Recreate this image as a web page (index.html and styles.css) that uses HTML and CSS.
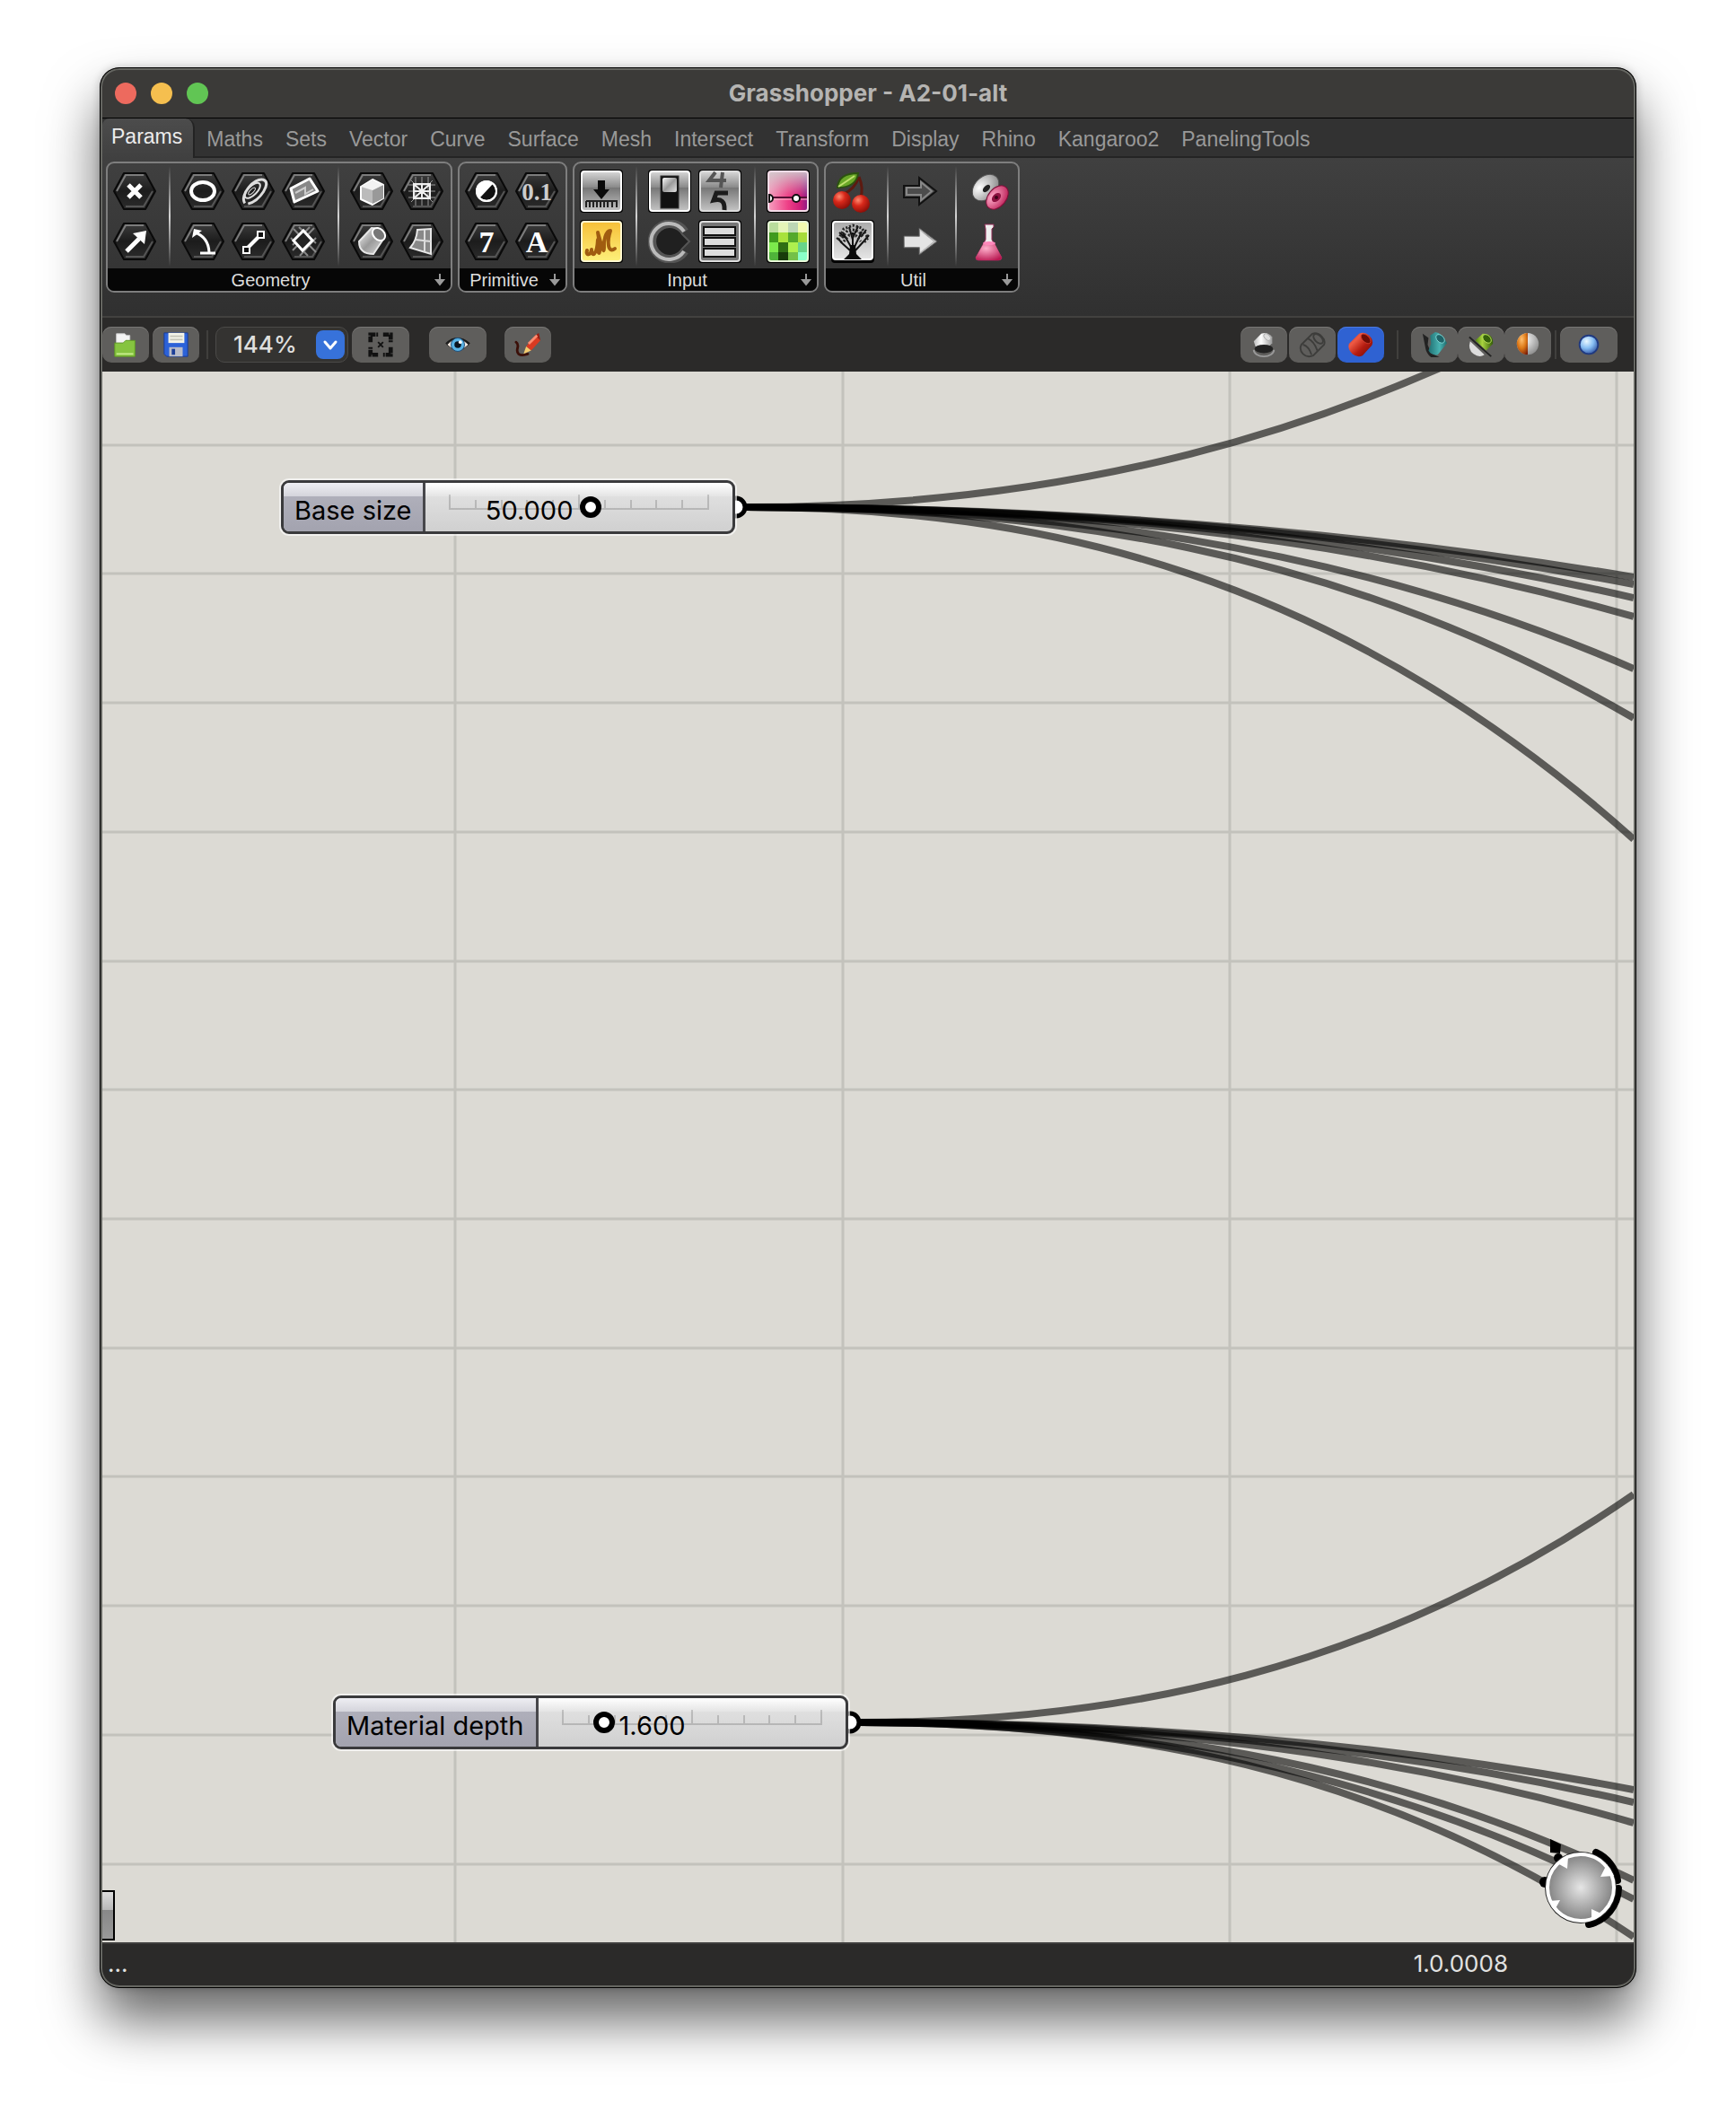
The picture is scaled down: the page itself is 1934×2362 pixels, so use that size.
FILE: index.html
```html
<!DOCTYPE html>
<html lang="en">
<head>
<meta charset="utf-8">
<title>Grasshopper - A2-01-alt</title>
<link rel="stylesheet" href="styles.css">
</head>
<body>
<svg class="defs" aria-hidden="true">
  <defs>
    <linearGradient id="hexFill" x1="0" y1="0" x2="0" y2="1"><stop offset="0" stop-color="#3c3c3c"/><stop offset=".5" stop-color="#1c1c1c"/><stop offset="1" stop-color="#2c2c2c"/></linearGradient>
    <linearGradient id="silver" x1="0" y1="0" x2="0" y2="1"><stop offset="0" stop-color="#d8d8d8"/><stop offset=".4" stop-color="#8a8a8a"/><stop offset=".42" stop-color="#777"/><stop offset="1" stop-color="#c4c4c4"/></linearGradient>
    <linearGradient id="lightSilver" x1="0" y1="0" x2="0" y2="1"><stop offset="0" stop-color="#aaa"/><stop offset="1" stop-color="#e6e6e6"/></linearGradient>
    <linearGradient id="plate" x1="0" y1="0" x2="1" y2="1"><stop offset="0" stop-color="#fafafa"/><stop offset=".5" stop-color="#9a9a9a"/><stop offset="1" stop-color="#e0e0e0"/></linearGradient>
    <linearGradient id="gold" x1="0" y1="0" x2="0" y2="1"><stop offset="0" stop-color="#f6bf38"/><stop offset="1" stop-color="#fdf07a"/></linearGradient>
    <linearGradient id="pinkSpan" x1="0" y1="0" x2="1" y2="0"><stop offset="0" stop-color="#f7a0c0"/><stop offset=".5" stop-color="#ee3f86"/><stop offset=".8" stop-color="#cf1f7a"/><stop offset="1" stop-color="#8a1c86"/></linearGradient>
    <linearGradient id="fadeDown" x1="0" y1="0" x2="0" y2="1"><stop offset="0" stop-color="#cfcfcf" stop-opacity=".85"/><stop offset="1" stop-color="#cfcfcf" stop-opacity="0"/></linearGradient>
    <radialGradient id="cherry" cx=".35" cy=".3" r=".8"><stop offset="0" stop-color="#ff8a70"/><stop offset=".4" stop-color="#d8281a"/><stop offset="1" stop-color="#7d0a05"/></radialGradient>
    <radialGradient id="pinkBall" cx=".4" cy=".3" r=".8"><stop offset="0" stop-color="#ffb0cc"/><stop offset="1" stop-color="#b8154f"/></radialGradient>
    <radialGradient id="whiteBall" cx=".35" cy=".3" r=".9"><stop offset="0" stop-color="#fff"/><stop offset="1" stop-color="#777"/></radialGradient>
    <radialGradient id="blueBall" cx=".38" cy=".32" r=".75"><stop offset="0" stop-color="#eaf8ff"/><stop offset=".5" stop-color="#86bdf3"/><stop offset="1" stop-color="#2d4f9e"/></radialGradient>
    <radialGradient id="orangeBall" cx=".45" cy=".3" r=".8"><stop offset="0" stop-color="#ffc070"/><stop offset=".5" stop-color="#dd7a18"/><stop offset="1" stop-color="#7a1d08"/></radialGradient>
    <linearGradient id="redCan" x1="0" y1="0" x2="1" y2="1"><stop offset="0" stop-color="#c8281a"/><stop offset=".3" stop-color="#ee5a44"/><stop offset=".6" stop-color="#b41c10"/><stop offset="1" stop-color="#6a0905"/></linearGradient>
    <linearGradient id="tealCan" x1="0" y1="0" x2="1" y2="0"><stop offset="0" stop-color="#1f6f72"/><stop offset=".6" stop-color="#49b4b2"/><stop offset="1" stop-color="#1d6a6c"/></linearGradient>
    <linearGradient id="greenCan" x1="0" y1="0" x2="1" y2="0"><stop offset="0" stop-color="#4d7d0c"/><stop offset=".4" stop-color="#a9d440"/><stop offset="1" stop-color="#325c05"/></linearGradient>
    <linearGradient id="whiteCan" x1="0" y1="0" x2="1" y2="0"><stop offset="0" stop-color="#bbb"/><stop offset=".4" stop-color="#fff"/><stop offset="1" stop-color="#9a9a9a"/></linearGradient>
    <radialGradient id="dial"><stop offset="0" stop-color="#e6e6e6"/><stop offset="1" stop-color="#828282"/></radialGradient>
    <symbol id="hex" viewBox="0 0 48 48">
      <path d="M1 24 12 4H36L47 24 36 44H12Z" fill="url(#hexFill)" stroke="#090909" stroke-width="2" stroke-linejoin="round"/>
      <path d="M4 24 14 6H34" fill="none" stroke="#7c7c7c" stroke-width="2"/>
      <path d="M44 24 34 41H14" fill="none" stroke="#555" stroke-width="2"/>
    </symbol>
    <symbol id="tile" viewBox="0 0 48 48"><rect x="0" y="0" width="48" height="48" rx="4" fill="#000"/></symbol>
    <symbol id="more" viewBox="0 0 14 14"><path d="M7 0V9M3 7l4 5 4-5Z" fill="#999" stroke="#999" stroke-width="2"/></symbol>
  </defs>
</svg>

<main class="window">
  <header class="titlebar">
    <div class="lights">
      <button class="light red" aria-label="Close"></button>
      <button class="light amber" aria-label="Minimize"></button>
      <button class="light green" aria-label="Zoom"></button>
    </div>
    <h1 class="title">Grasshopper - A2-01-alt</h1>
  </header>

  <nav class="tabs" aria-label="Component tabs">
    <button class="tab active">Params</button>
    <button class="tab">Maths</button>
    <button class="tab">Sets</button>
    <button class="tab">Vector</button>
    <button class="tab">Curve</button>
    <button class="tab">Surface</button>
    <button class="tab">Mesh</button>
    <button class="tab">Intersect</button>
    <button class="tab">Transform</button>
    <button class="tab">Display</button>
    <button class="tab">Rhino</button>
    <button class="tab">Kangaroo2</button>
    <button class="tab">PanelingTools</button>
  </nav>

  <div class="ribbon">
    <section class="group">
      <div class="group-body">
        <div class="cols">
          <button class="tool" aria-label="Point"><svg viewBox="0 0 48 48"><use href="#hex"/><path d="M17 17 31 31M31 17 17 31" stroke="#fff" stroke-width="5"/></svg></button>
          <button class="tool" aria-label="Vector"><svg viewBox="0 0 48 48"><use href="#hex"/><path d="M15 35 29 21" stroke="#fff" stroke-width="5"/><path d="M37 12 35 27 22 15Z" fill="#fff"/></svg></button>
        </div>
        <span class="rule"></span>
        <div class="cols">
          <button class="tool" aria-label="Circle"><svg viewBox="0 0 48 48"><use href="#hex"/><ellipse cx="24" cy="24" rx="13" ry="10" fill="none" stroke="#fff" stroke-width="4"/></svg></button>
          <button class="tool" aria-label="Circular Arc"><svg viewBox="0 0 48 48"><use href="#hex"/><path d="M15 14Q30 19 31 36M21 37H38" fill="none" stroke="#fff" stroke-width="3"/><path d="M12 20 14 10 23 12Z" fill="#fff"/></svg></button>
          <button class="tool" aria-label="Curve"><svg viewBox="0 0 48 48"><use href="#hex"/><g fill="none" stroke="#ddd" transform="rotate(-45 24 24)"><path d="M8 27C10 16 36 14 41 23S22 37 10 30" stroke-width="3"/><ellipse cx="24" cy="23" rx="11" ry="5" stroke-width="2"/><ellipse cx="23" cy="23" rx="5" ry="2"/></g></svg></button>
          <button class="tool" aria-label="Line"><svg viewBox="0 0 48 48"><use href="#hex"/><path d="M16 33 32 17" stroke="#fff" stroke-width="4"/><path d="M13 30h7v7h-7zM29 13h7v7h-7z" fill="#111" stroke="#fff" stroke-width="2"/></svg></button>
          <button class="tool" aria-label="Surface"><svg viewBox="0 0 48 48"><use href="#hex"/><path d="M10 21 31 10 40 24 14 36Z" fill="#888" stroke="#fff" stroke-width="3" stroke-linejoin="round"/><path d="M15 26 26 20V27L35 22" fill="none" stroke="#ccc" stroke-width="2"/></svg></button>
          <button class="tool" aria-label="Rectangle"><svg viewBox="0 0 48 48"><use href="#hex"/><path d="M13 10 38 36M36 9 12 34M38 20 20 40M10 20 29 40M19 8 38 26M12 28 31 8" stroke="#888" stroke-width="2"/><path d="M13 23 24 12 34 23 23 34Z" fill="#222" stroke="#fff" stroke-width="3"/></svg></button>
        </div>
        <span class="rule"></span>
        <div class="cols">
          <button class="tool" aria-label="Box"><svg viewBox="0 0 48 48"><use href="#hex"/><path d="M12 19 25 11 37 17V32L25 39 12 33Z" fill="#bbb" stroke="#fff" stroke-width="2" stroke-linejoin="round"/><path d="M25 23V38L37 32V17Z" fill="#999"/><path d="M12 19 25 23 37 17 25 12Z" fill="#f2f2f2"/></svg></button>
          <button class="tool" aria-label="Brep"><svg viewBox="0 0 48 48"><use href="#hex"/><path d="M10 24 24 9Q38 9 38 20L26 38Q10 38 10 24Z" fill="url(#plate)" stroke="#e6e6e6" stroke-width="2"/><ellipse cx="32" cy="16" rx="8" ry="6" transform="rotate(45 32 16)" fill="#777" stroke="#fff" stroke-width="2"/></svg></button>
          <button class="tool" aria-label="Mesh"><svg viewBox="0 0 48 48"><use href="#hex"/><path d="M9 17H39M9 24H39M9 31H39M17 8V40M24 8V40M31 8V40M12 12 36 36M36 12 12 36" stroke="#999"/><path d="M15 16h18v16H15zM24 16V32M15 24H33M15 16 33 32M33 16 15 32" fill="none" stroke="#eee" stroke-width="2"/></svg></button>
          <button class="tool" aria-label="Twisted Box"><svg viewBox="0 0 48 48"><use href="#hex"/><path d="M19 11 34 10V38L11 31Q18 23 19 11Z" fill="#888" stroke="#e8e8e8" stroke-width="2"/><path d="M27 11V36M17 22 34 24" stroke="#ddd" stroke-width="2"/></svg></button>
        </div>
      </div>
      <footer class="group-label"><span>Geometry</span><svg class="more" viewBox="0 0 14 14"><use href="#more"/></svg></footer>
    </section>

    <section class="group">
      <div class="group-body">
        <div class="cols">
          <button class="tool" aria-label="Boolean"><svg viewBox="0 0 48 48"><use href="#hex"/><circle cx="24" cy="24" r="12" fill="#fff"/><path d="M31 16A10 10 0 0 1 17 31Z" fill="#111"/><circle cx="24" cy="24" r="11" fill="none" stroke="#fff" stroke-width="2"/></svg></button>
          <button class="tool" aria-label="Integer"><svg viewBox="0 0 48 48"><use href="#hex"/><text class="glyph" x="24" y="36" text-anchor="middle">7</text></svg></button>
          <button class="tool" aria-label="Number"><svg viewBox="0 0 48 48"><use href="#hex"/><text class="glyph decimal" x="24" y="34" text-anchor="middle">0.1</text></svg></button>
          <button class="tool" aria-label="Text"><svg viewBox="0 0 48 48"><use href="#hex"/><text class="glyph" x="24" y="36" text-anchor="middle">A</text></svg></button>
        </div>
      </div>
      <footer class="group-label"><span>Primitive</span><svg class="more" viewBox="0 0 14 14"><use href="#more"/></svg></footer>
    </section>

    <section class="group">
      <div class="group-body">
        <div class="cols">
          <button class="tool" aria-label="Number Slider"><svg viewBox="0 0 48 48"><use href="#tile"/><rect x="2" y="2" width="44" height="44" rx="3" fill="url(#silver)" stroke="#fff" stroke-width="2"/><path d="M20 12h8v10h5l-9 11-9-11h5Z" fill="#0a0a0a"/><path d="M7 35H41V42M7 42V35M11 35v7M15 35v7M19 35v7M23 35v7M27 35v7M31 35v7M36 35v7" fill="none" stroke="#222" stroke-width="2"/></svg></button>
          <button class="tool" aria-label="Panel"><svg viewBox="0 0 48 48"><use href="#tile"/><rect x="2" y="2" width="44" height="44" rx="3" fill="url(#gold)" stroke="#fff8d0" stroke-width="2"/><path d="M8 34C6 40 12 40 13 33C13 42 19 40 20 22C19 42 25 44 20 14C24 28 27 40 27 31C26 24 29 12 34 12C30 24 31 38 39 32" fill="none" stroke="#a05c10" stroke-width="4" stroke-linecap="round" stroke-linejoin="round"/></svg></button>
        </div>
        <span class="rule"></span>
        <div class="cols">
          <button class="tool" aria-label="Boolean Toggle"><svg viewBox="0 0 48 48"><use href="#tile"/><rect x="2" y="2" width="44" height="44" rx="3" fill="url(#silver)" stroke="#fff" stroke-width="2"/><rect x="14" y="7" width="20" height="36" fill="#111" stroke="#333"/><rect x="16" y="9" width="16" height="16" rx="2" fill="url(#plate)"/></svg></button>
          <button class="tool" aria-label="Control Knob"><svg viewBox="0 0 48 48"><path d="M41 13A20 20 0 1 0 41 35" fill="none" stroke="#555" stroke-width="9"/><path d="M40 13A20 20 0 1 0 40 35" fill="none" stroke="#bbb" stroke-width="4"/><path d="M38 16 46 24 38 32A16 16 0 1 1 38 16Z" fill="#202020" stroke="#555" stroke-width="2"/></svg></button>
          <button class="tool" aria-label="Digit Scroller"><svg viewBox="0 0 48 48"><use href="#tile"/><rect x="2" y="2" width="44" height="44" rx="3" fill="url(#silver)" stroke="#ddd" stroke-width="2"/><path d="M19 3 12 12H31M27 3 25 20" fill="none" stroke="#555" stroke-width="4"/><path d="M33 26H20L17 34Q30 31 29 45" fill="none" stroke="#1c1c1c" stroke-width="5"/></svg></button>
          <button class="tool" aria-label="Value List"><svg viewBox="0 0 48 48"><use href="#tile"/><rect x="2" y="2" width="44" height="44" rx="3" fill="#777" stroke="#ddd" stroke-width="2"/><path d="M6 8H41V17H6ZM6 20H41V29H6ZM6 32H41V41H6Z" fill="#ddd" stroke="#111" stroke-width="2"/></svg></button>
        </div>
        <span class="rule"></span>
        <div class="cols">
          <button class="tool" aria-label="Gradient"><svg viewBox="0 0 48 48"><use href="#tile"/><rect x="2" y="2" width="44" height="44" rx="3" fill="url(#pinkSpan)"/><rect x="3" y="3" width="42" height="27" fill="url(#fadeDown)"/><rect x="2" y="2" width="44" height="44" rx="3" fill="none" stroke="#f4dce8" stroke-width="2"/><path d="M3 31H45" stroke="#5a1035" stroke-width="2"/><path d="M3 33H45" stroke="#fbc" stroke-width="1"/><circle cx="33" cy="32" r="4" fill="#fff" stroke="#111" stroke-width="2"/><path d="M3 28A4 4 0 0 1 3 36Z" fill="#fff" stroke="#111" stroke-width="2"/></svg></button>
          <button class="tool" aria-label="Image Sampler"><svg viewBox="0 0 48 48"><use href="#tile"/><path d="M2 2H13V14H2Z" fill="#b9dd9c"/><path d="M13 2H24V14H13Z" fill="#e4f5b8"/><path d="M24 2H35V14H24Z" fill="#bcd7b4"/><path d="M35 2H46V14H35Z" fill="#f2fbb0"/><path d="M2 14H13V25H2Z" fill="#3f9a1e"/><path d="M13 14H24V25H13Z" fill="#a8e23c"/><path d="M24 14H35V25H24Z" fill="#54a82c"/><path d="M35 14H46V25H35Z" fill="#a6dc3a"/><path d="M2 25H13V36H2Z" fill="#7cea4c"/><path d="M13 25H24V36H13Z" fill="#2f6e14"/><path d="M24 25H35V36H24Z" fill="#aef04e"/><path d="M35 25H46V36H35Z" fill="#68d48a"/><path d="M2 36H13V46H2Z" fill="#4fb43a"/><path d="M13 36H24V46H13Z" fill="#183c0a"/><path d="M24 36H35V46H24Z" fill="#74c048"/><path d="M35 36H46V46H35Z" fill="#8affc8"/><rect x="2" y="2" width="44" height="44" rx="3" fill="none" stroke="#e8f8d8" stroke-width="2"/></svg></button>
        </div>
      </div>
      <footer class="group-label"><span>Input</span><svg class="more" viewBox="0 0 14 14"><use href="#more"/></svg></footer>
    </section>

    <section class="group">
      <div class="group-body">
        <div class="cols">
          <button class="tool" aria-label="Cherry Picker"><svg viewBox="0 0 48 48"><path d="M31 8Q26 22 14 27M31 8Q36 20 33 31" fill="none" stroke="#5d1a10" stroke-width="3"/><path d="M7 20Q8 4 30 4Q28 20 7 20Z" fill="#6aa828" stroke="#2c5210" stroke-width="2"/><path d="M8 19 26 7" stroke="#c0e070" stroke-width="2"/><circle cx="12" cy="34" r="10" fill="url(#cherry)"/><circle cx="33" cy="38" r="10" fill="url(#cherry)"/></svg></button>
          <button class="tool" aria-label="Galapagos"><svg viewBox="0 0 48 48"><use href="#tile"/><rect x="2" y="2" width="44" height="42" rx="3" fill="url(#lightSilver)" stroke="#fff" stroke-width="2"/><path d="M21 34 10 24M27 34 38 22M24 32V14M22 30 13 14M26 30 34 13M24 22 20 8M24 20 30 7M12 25 6 20M37 23 42 17M16 20 9 14M33 19 39 11" stroke="#111" stroke-width="2" fill="none"/><path d="M21 28H27L28 38 34 44H14L20 38Z" fill="#0a0a0a"/><g fill="none" stroke="#222" stroke-width="3" stroke-dasharray="2 2"><path d="M8 22 14 10 24 6 34 9 41 20 36 26"/><path d="M12 20 18 12 24 11 31 13 36 20"/><path d="M14 24 20 17 28 18 33 24"/></g></svg></button>
        </div>
        <span class="rule"></span>
        <div class="cols">
          <button class="tool" aria-label="Data Input"><svg viewBox="0 0 48 48"><path d="M5 18H22V9L41 24 22 39V31H5Z" fill="#4c4c4c" stroke="#111" stroke-width="2"/><path d="M8 20H24V14L36 24 24 34V28H8Z" fill="none" stroke="#888" stroke-width="2"/></svg></button>
          <button class="tool" aria-label="Data Output"><svg viewBox="0 0 48 48"><path d="M5 18H22V9L42 24 22 39V31H5Z" fill="url(#plate)" stroke="#555"/><path d="M6 19H23V12L38 24 23 36V30H6Z" fill="#e4e4e4"/></svg></button>
        </div>
        <span class="rule"></span>
        <div class="cols">
          <button class="tool" aria-label="Relay"><svg viewBox="0 0 48 48"><ellipse cx="20" cy="20" rx="17" ry="12" transform="rotate(-45 20 20)" fill="url(#whiteBall)" stroke="#555"/><ellipse cx="21" cy="21" rx="5" ry="3" transform="rotate(-45 21 21)" fill="#222"/><ellipse cx="33" cy="31" rx="15" ry="10" transform="rotate(-50 33 31)" fill="url(#pinkBall)" stroke="#7d0f38"/><ellipse cx="32" cy="31" rx="6" ry="4" transform="rotate(-45 32 31)" fill="#8d1240"/><circle cx="32" cy="31" r="2" fill="#3c0418"/></svg></button>
          <button class="tool" aria-label="Fitness Landscape"><svg viewBox="0 0 48 48"><path d="M19 5H29V8L27 10V22L38 42Q38 45 34 45H12Q9 45 9 42L20 22V10Z" fill="#eee" stroke="#8e2a55"/><path d="M18 26H30L38 42Q38 45 34 45H12Q9 45 9 42Z" fill="url(#pinkBall)"/><ellipse cx="24" cy="26" rx="7" ry="2" fill="#f8b"/></svg></button>
        </div>
      </div>
      <footer class="group-label"><span>Util</span><svg class="more" viewBox="0 0 14 14"><use href="#more"/></svg></footer>
    </section>
  </div>

  <div class="toolbar">
    <div class="cluster files">
      <button class="btn" aria-label="Open"><svg viewBox="0 0 32 32"><path d="M5 14V3H15L17 5H21V14Z" fill="#f4f4f4" stroke="#ccc"/><path d="M3 14H13L16 11H27V30H3Z" fill="#86c440" stroke="#5f9a24"/><path d="M5 27H25" stroke="#c6ec8c" stroke-width="2"/></svg></button>
      <button class="btn" aria-label="Save"><svg viewBox="0 0 32 32"><path d="M2 2H30V30H5L2 27Z" fill="#2c62d8" stroke="#173a94" stroke-width="1"/><rect x="7" y="2" width="19" height="12" fill="#f3f3e8"/><path d="M9 6H24M9 10H24" stroke="#c4c4b8" stroke-width="2"/><rect x="8" y="19" width="16" height="11" fill="#b9bcc8"/><rect x="11" y="21" width="4" height="7" fill="#1d3f98"/></svg></button>
    </div>
    <span class="divider"></span>
    <label class="combo"><select aria-label="Zoom level"><option>144%</option><option>100%</option></select><span class="chevron"><svg viewBox="0 0 32 32"><path d="M10 13 16 20 22 13" fill="none" stroke="#fff" stroke-width="3" stroke-linecap="round" stroke-linejoin="round"/></svg></span></label>
    <button class="btn wide" aria-label="Zoom extents"><svg viewBox="0 0 32 32"><path d="M4 13V4H13M19 4H28V13M28 19V28H19M13 28H4V19" fill="none" stroke="#111" stroke-width="5" stroke-dasharray="7 1"/><path d="M13 13 19 19M19 13 13 19" stroke="#111" stroke-width="2"/></svg></button>
    <button class="btn wide eye" aria-label="Named views"><svg viewBox="0 0 32 32"><path d="M3 16Q16 1 29 16Q16 30 3 16Z" fill="#efe6de" stroke="#222"/><path d="M2 15Q15 2 30 15" fill="none" stroke="#1a1a1a" stroke-width="2"/><circle cx="16" cy="16" r="8" fill="#58b2e4" stroke="#1d4c78"/><circle cx="16" cy="16" r="4" fill="#0a1420"/><circle cx="19" cy="13" r="2" fill="#fff"/></svg></button>
    <button class="btn pen" aria-label="Sketch"><svg viewBox="0 0 32 32"><path d="M2 13C8 17 0 22 5 27C9 30 12 28 16 27" fill="none" stroke="#3b0f08" stroke-width="3" stroke-linecap="round"/><path d="M14 18 25 5 31 11 20 23Z" fill="#d93a22"/><path d="M25 5 29 2 31 11Z" fill="#991c10"/><path d="M17 15 27 5" stroke="#ff8c70" stroke-width="3"/><path d="M14 18 20 23 11 27Z" fill="#f4cc70"/></svg></button>

    <div class="cluster preview">
      <button class="btn" aria-label="No preview"><svg viewBox="0 0 32 32"><path d="M4 12 13 3Q20 0 26 7V14L22 18H6Z" fill="url(#whiteCan)"/><ellipse cx="20" cy="7" rx="5" ry="3" transform="rotate(45 20 7)" fill="#ddd" stroke="#aaa"/><path d="M4 22A12 8 0 0 0 28 22" fill="none" stroke="#999" stroke-width="2"/><ellipse cx="16" cy="21" rx="11" ry="5" fill="#222"/></svg></button>
      <button class="btn" aria-label="Wireframe preview"><svg viewBox="0 0 32 32"><g fill="none" stroke="#3d3d3b" stroke-width="2"><path d="M3 16 16 3Q22 1 27 6T30 16L17 29Q10 32 5 27T3 16Z"/><ellipse cx="23" cy="9" rx="7" ry="4" transform="rotate(45 23 9)"/><path d="M11 9Q18 12 22 23M5 16Q12 18 15 28"/></g></svg></button>
      <button class="btn selected" aria-label="Shaded preview"><svg viewBox="0 0 32 32"><path d="M2 15 14 3Q20 0 26 5Q32 11 29 17L18 29Q12 32 6 27Q0 21 2 15Z" fill="url(#redCan)"/><ellipse cx="22" cy="9" rx="7" ry="4" transform="rotate(45 22 9)" fill="#6d0c06" stroke="#c83828"/></svg></button>
    </div>
    <span class="divider"></span>
    <div class="cluster modes">
      <button class="btn" aria-label="Document preview"><svg viewBox="0 0 32 32"><path d="M2 3 9 8 8 16 12 26 22 31H12Q6 26 5 18Z" fill="#222"/><path d="M11 5 17 1Q25 2 31 14L20 28Q12 29 9 23L12 15Z" fill="url(#tealCan)"/><ellipse cx="23" cy="9" rx="6" ry="4" transform="rotate(45 23 9)" fill="#1e6468" stroke="#7fd4d2"/></svg></button>
      <button class="btn" aria-label="Selected preview"><svg viewBox="0 0 32 32"><path d="M3 12 20 28Q14 32 7 27T3 12Z" fill="#ddd"/><path d="M2 7 28 30" stroke="#222" stroke-width="2"/><path d="M9 11 18 3Q31 3 30 15L22 23Z" fill="url(#greenCan)"/><ellipse cx="23" cy="9" rx="6" ry="4" transform="rotate(45 23 9)" fill="#35600a" stroke="#b8e05c"/></svg></button>
      <button class="btn" aria-label="Preview quality"><svg viewBox="0 0 32 32"><circle cx="16" cy="15" r="13" fill="url(#whiteBall)"/><path d="M16 2A13 13 0 0 0 16 28Z" fill="url(#orangeBall)"/></svg></button>
    </div>
    <span class="divider tight"></span>
    <button class="btn wide" aria-label="Mesh settings"><svg viewBox="0 0 32 32"><circle cx="16" cy="16" r="11" fill="url(#blueBall)" stroke="#203a80" stroke-width="2"/></svg></button>
  </div>

  <div class="canvas">
    <svg class="sheet" width="1706" height="1750" viewBox="0 0 1706 1750" aria-hidden="true">
      <path class="grid" d="M0 82H1706M0 225H1706M0 369H1706M0 513H1706M0 657H1706M0 800H1706M0 944H1706M0 1088H1706M0 1231H1706M0 1375H1706M0 1519H1706M0 1663H1706M393 0V1750M825 0V1750M1256 0V1750M1687 0V1750"/>
      <g class="port"><circle cx="706" cy="151" r="10"/><circle cx="833" cy="1505" r="10"/></g>
      <g class="wires">
        <path d="M716 151C1046 151 1376 83 1706 -116"/>
        <path d="M716 151C1046 151 1376 174 1706 229"/>
        <path d="M716 151C1046 151 1376 174 1706 237"/>
        <path d="M716 151C1046 151 1376 176 1706 252"/>
        <path d="M716 151C1046 151 1376 178 1706 273"/>
        <path d="M716 151C1046 151 1376 188 1706 331"/>
        <path d="M716 151C1046 151 1376 194 1706 386"/>
        <path d="M716 151C1046 151 1376 226 1706 521"/>
        <path d="M843 1505C1130 1505 1418 1450 1706 1251"/>
        <path d="M843 1505C1130 1505 1418 1525 1706 1580"/>
        <path d="M843 1505C1130 1505 1418 1528 1706 1594"/>
        <path d="M843 1505C1130 1505 1418 1533 1706 1617"/>
        <path d="M843 1505C1130 1505 1418 1541 1706 1681"/>
        <path d="M843 1505C1130 1505 1418 1553 1706 1702"/>
        <path d="M843 1505C1130 1505 1418 1551 1706 1744"/>
      </g>
    </svg>

    <div class="node base">
      <label class="node-name" for="base">Base size</label>
      <div class="node-slider">
        <svg class="ticks" width="290" height="18" viewBox="0 0 290 18" aria-hidden="true"><path d="M1 1V17H289V1M30 7V17M59 7V17M87 7V17M116 7V17M145 1V17M174 7V17M203 7V17M231 7V17M260 7V17"/></svg>
        <input id="base" type="range" min="0" max="92" step="0.001" value="50">
        <output class="value" for="base">50.000</output>
      </div>
    </div>

    <div class="node depth">
      <label class="node-name" for="depth">Material depth</label>
      <div class="node-slider">
        <svg class="ticks" width="290" height="18" viewBox="0 0 290 18" aria-hidden="true"><path d="M1 1V17H289V1M30 7V17M59 7V17M87 7V17M116 7V17M145 1V17M174 7V17M203 7V17M231 7V17M260 7V17"/></svg>
        <input id="depth" type="range" min="0" max="10" step="0.001" value="1.6">
        <output class="value" for="depth">1.600</output>
      </div>
    </div>

    <div class="stub"></div>

    <svg class="compass" viewBox="0 0 110 110" aria-hidden="true">
      <path d="M23 5 35 11 34 21 23 20Z"/>
      <circle cx="32" cy="26" r="5"/><circle cx="17" cy="53" r="6"/>
      <path d="M74 20A42 42 0 0 1 98 51M99 60A42 42 0 0 1 66 100" fill="none" stroke="#000" stroke-width="8" stroke-linecap="round"/>
      <circle cx="57" cy="59" r="40" fill="#222"/>
      <circle cx="57" cy="59" r="37" fill="url(#dial)" stroke="#fff" stroke-width="4"/>
      <path d="M31 32 43 25 42 38ZM79 47 86 33 94 46ZM22 74 34 73 28 84ZM69 83 80 88 69 96Z" fill="#fff"/>
    </svg>
  </div>

  <footer class="status"><span>...</span><span>1.0.0008</span></footer>
</main>
</body>
</html>
```
FILE: styles.css
```css
* { box-sizing: border-box; }

body {
  margin: 0;
  min-height: 100vh;
  padding: 75px 111px 147px;
  display: flex;
  background: #fff;
  font-family: Inter, "Liberation Sans", sans-serif;
}

button {
  margin: 0;
  padding: 0;
  border: 0;
  background: none;
  color: inherit;
  font: inherit;
}

.defs { position: absolute; width: 0; height: 0; }

/* Window shell */
.window {
  position: relative;
  flex: 1;
  min-width: 0;
  display: flex;
  flex-direction: column;
  padding: 3px;
  border-radius: 22px;
  overflow: hidden;
  background: #2b2a29;
  box-shadow: 0 36px 60px rgba(0, 0, 0, .6), 0 0 10px rgba(0, 0, 0, .2);
}

.window::after {
  content: "";
  position: absolute;
  inset: 0;
  border: 1px solid #000;
  border-radius: 22px;
  box-shadow: inset 0 0 0 2px #656661;
  pointer-events: none;
}

.titlebar {
  height: 54px;
  display: grid;
  grid-template-columns: 1fr auto 1fr;
  align-items: center;
  padding: 0 14px 2px;
  background: #3b3a38;
  border-bottom: 1px solid #000;
}

.lights { display: flex; gap: 16px; }
.light { width: 24px; height: 24px; border-radius: 50%; }
.red { background: #ed6a5e; }
.amber { background: #f5bf4f; }
.green { background: #61c554; }

.title {
  margin: 0;
  color: #b5b4b2;
  font-size: 26px;
  font-weight: 700;
  line-height: 32px;
}

/* Tabs */
.tabs {
  display: flex;
  height: 44px;
  background: #323232;
  border-bottom: 2px solid #242424;
  color: #999;
  font-family: "Liberation Sans", Arial, sans-serif;
  font-size: 23px;
  line-height: 46px;
}

.tab { padding: 0 12px 0 13px; white-space: nowrap; }

.tab.active {
  position: relative;
  height: 44px;
  padding: 0 12px 4px 10px;
  border-radius: 8px 10px 0 0;
  border-right: 2px solid #232323;
  background: linear-gradient(#4c4c4c, #404040);
  color: #ececec;
  line-height: 36px;
}

/* Ribbon */
.ribbon {
  display: flex;
  align-items: flex-start;
  gap: 6px;
  height: 178px;
  padding: 4px;
  background: linear-gradient(#404040, #303030);
  border-bottom: 2px solid #42413f;
}

.group {
  border: 2px solid #7e7e7e;
  border-radius: 9px;
  overflow: hidden;
}

.group-body { display: flex; height: 117px; padding: 3px 4px 2px 2px; }

.cols {
  display: grid;
  grid-template-rows: 56px 56px;
  grid-auto-columns: 56px;
  grid-auto-flow: column;
}

.rule {
  width: 2px;
  margin: 0 8px 0 10px;
  background: linear-gradient(transparent, #d4d4d4 50%, transparent);
}

.tool { display: grid; place-items: center; }
.tool svg { display: block; width: 48px; height: 48px; }

.glyph { fill: #fff; font: 700 34px "Liberation Serif", serif; }
.decimal { font-size: 27px; fill: #ccc; }

.group-label {
  display: flex;
  align-items: center;
  height: 25px;
  padding-right: 5px;
  background: #060606;
  color: #ddd;
  font-family: "Liberation Sans", Arial, sans-serif;
  font-size: 20px;
  line-height: 24px;
}

.group-label span { flex: 1; text-align: center; }
.more { width: 14px; height: 14px; }

/* Toolbar */
.toolbar {
  display: flex;
  align-items: center;
  height: 60px;
  padding-right: 18px;
  background: #2b2a29;
}

.cluster { display: flex; }
.files { gap: 4px; }
.preview { gap: 2px; margin-left: auto; }

.btn {
  display: grid;
  place-items: center;
  width: 52px;
  height: 40px;
  border-radius: 10px;
  background: #5f5e5c;
  box-shadow: inset 0 1px #787775;
}

.btn svg { display: block; width: 30px; height: 30px; }
.wide { width: 64px; }
.eye { margin-left: 22px; }
.pen { margin-left: 20px; }
.selected { background: #2f62d2; box-shadow: inset 0 1px #4c7ae0; }

.divider { width: 2px; height: 32px; margin: 0 8px; background: #403f3d; }
.preview + .divider { margin: 0 14px; }
.divider.tight { margin: 0 4px; }

.combo {
  display: flex;
  align-items: center;
  width: 148px;
  height: 40px;
  margin-right: 4px;
  padding-right: 3px;
  border: 1px solid #4b4a48;
  border-radius: 10px;
  background: #343331;
}

.combo select {
  appearance: none;
  flex: 1;
  min-width: 0;
  height: 38px;
  margin: 0;
  padding: 0 0 0 19px;
  border: 0;
  background: none;
  color: #dfdfde;
  font: 500 26px/38px Inter, sans-serif;
}

.chevron { width: 32px; height: 32px; border-radius: 8px; background: #3772da; }
.chevron svg { display: block; width: 32px; height: 32px; }

/* Document canvas */
.canvas {
  position: relative;
  flex: 1;
  min-height: 1750px;
  overflow: hidden;
  background: #dcdad4;
}

.sheet { position: absolute; left: 0; top: 0; }
.grid { fill: none; stroke: rgba(0, 0, 0, .11); stroke-width: 3; }
.port { fill: #fff; stroke: #000; stroke-width: 5; }
.wires { fill: none; stroke: rgba(0, 0, 0, .59); stroke-width: 8; }

.node {
  position: absolute;
  display: flex;
  height: 60px;
  border: 3px solid #3a3a3c;
  border-radius: 9px;
  background: linear-gradient(#fff, #e4e4e4 28%, #dfdfdf 28%, #d0d0d0);
  box-shadow: 0 0 0 2px rgba(255, 255, 255, .6);
  color: #000;
  font-size: 29px;
  line-height: 34px;
}

.base { left: 199px; top: 121px; }
.depth { left: 257px; top: 1475px; }

.node-name {
  display: grid;
  align-items: center;
  padding: 8px 13px 0 12px;
  border-right: 3px solid #47474b;
  border-radius: 6px 0 0 6px;
  background: linear-gradient(#eeeef3, #d4d4db 28%, #afafba 28%, #a3a3af);
  white-space: nowrap;
}

.node-slider { position: relative; width: 342px; }

.ticks {
  position: absolute;
  left: 26px;
  top: 12px;
  fill: none;
  stroke: rgba(0, 0, 0, .16);
  stroke-width: 2;
}

.node input {
  appearance: none;
  position: absolute;
  left: 15px;
  top: 15px;
  width: 312px;
  height: 24px;
  margin: 0;
  background: none;
}

.node input::-webkit-slider-thumb {
  appearance: none;
  width: 24px;
  height: 24px;
  border: 6px solid #000;
  border-radius: 50%;
  background: #fff;
}

.value { position: absolute; top: 14px; }
.base .value { right: 178px; }
.depth .value { left: 90px; }

/* Edge of an off-screen component */
.stub {
  position: absolute;
  left: 0;
  bottom: 2px;
  width: 14px;
  height: 56px;
  border: 2px solid #000;
  border-left: 0;
  background: linear-gradient(#ddd, #b8b8b8 38%, #888 38%, #999);
}

.compass { position: absolute; right: 6px; bottom: 10px; width: 110px; height: 110px; }

/* Status bar */
.status {
  display: flex;
  justify-content: space-between;
  height: 48px;
  padding: 0 140px 0 6px;
  border-top: 2px solid #3e3d3c;
  color: #e2e2e1;
  font-size: 26px;
  line-height: 44px;
}
```
